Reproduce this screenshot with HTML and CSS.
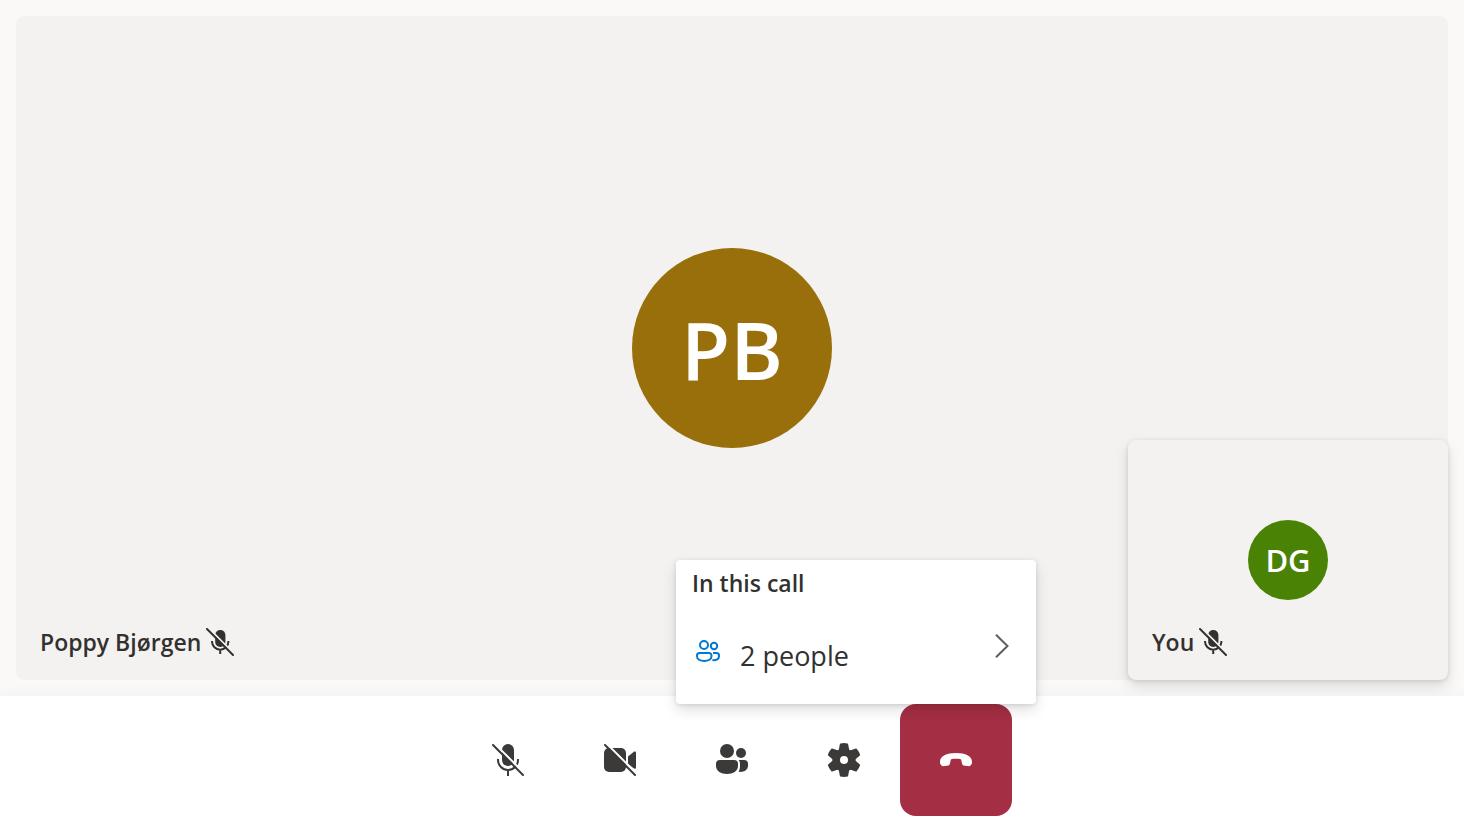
FILE: index.html
```
<!DOCTYPE html>
<html lang="en">
<head>
<meta charset="utf-8">
<meta name="viewport" content="width=device-width, initial-scale=1">
<title>Call</title>
<link rel="stylesheet" href="styles.css">
</head>
<body>
<svg class="sprite" aria-hidden="true">
  <symbol id="mic-small" viewBox="0 0 28 28">
    <rect x="9.200" y="2" width="10.200" height="17" rx="5" fill="currentColor"/>
    <path d="M6 13v.5a8.200 8.200 0 0 0 16.400 0V13M14.200 21.700V26" fill="none" stroke="currentColor" stroke-width="2"/>
    <path class="gap" d="M3 .600L27.400 25"/>
    <path d="M1 1l26 26" stroke="currentColor" stroke-width="2" stroke-linecap="round"/>
  </symbol>
</svg>
<main class="stage">
  <section class="tile tile-remote">
    <div class="avatar avatar-large">PB</div>
    <div class="name">Poppy Bjørgen <svg class="name-icon"><use href="#mic-small"/></svg></div>
    <section class="tile tile-self">
      <div class="avatar avatar-small">DG</div>
      <div class="name">You <svg class="name-icon"><use href="#mic-small"/></svg></div>
    </section>
  </section>
</main>
<footer class="bar">
  <button class="control" type="button" aria-label="Unmute">
    <svg class="icon" viewBox="0 0 32 32">
      <rect x="10" y="0" width="12" height="22" rx="6" fill="currentColor"/>
      <path d="M6 15v1a10 10 0 0 0 20 0v-1M16 26v6" fill="none" stroke="currentColor" stroke-width="2"/>
      <path class="gap" d="M3 0L32 29"/>
      <path d="M1 1l30 30" stroke="currentColor" stroke-width="2" stroke-linecap="round"/>
    </svg>
  </button>
  <button class="control" type="button" aria-label="Turn on camera">
    <svg class="icon" viewBox="0 0 32 32">
      <rect x="0" y="4" width="22" height="24" rx="5" fill="currentColor"/>
      <path d="M24 12.400l5.600-4.500C30.700 7 32 7.400 32 8.800v14.600c0 1.400-1.300 1.800-2.400.9L24 20z" fill="currentColor"/>
      <path class="gap" d="M3 0L32 29"/>
      <path d="M1 1l30 30" stroke="currentColor" stroke-width="2" stroke-linecap="round"/>
    </svg>
  </button>
  <div class="people">
    <button class="control" type="button" aria-label="People" aria-expanded="true">
      <svg class="icon" viewBox="0 0 32 32" fill="currentColor">
        <circle cx="11" cy="7" r="7"/>
        <circle cx="25" cy="9" r="5"/>
        <path d="M4 16h14a4 4 0 0 1 4 4v2c0 5-5 8-11 8S0 27 0 22v-2a4 4 0 0 1 4-4z"/>
        <path d="M22.600 16H28a4 4 0 0 1 4 4v1.500c0 4.500-4 7-9.500 6.300C23.600 26 24 24.200 24 22v-2c0-1.600-.5-3-1.400-4z"/>
      </svg>
    </button>
    <div class="popup">
      <h2 class="popup-title">In this call</h2>
      <button class="popup-row" type="button">
        <svg class="popup-people" viewBox="0 0 24 22" fill="none" stroke="currentColor" stroke-width="2">
          <circle cx="8" cy="5" r="4"/>
          <circle cx="18" cy="6" r="3.200"/>
          <path d="M3.500 13h9.500a2.500 2.500 0 0 1 2.500 2.500v.7c0 3-3.200 4.800-7.200 4.800S1 19.200 1 16.200v-.7A2.500 2.500 0 0 1 3.500 13zM17 13h3.500a2.500 2.500 0 0 1 2.500 2.500v.7c0 2.800-2.500 4.300-6.600 3.900"/>
        </svg>
        <span class="popup-label">2 people</span>
        <svg class="chevron" viewBox="0 0 14 24" fill="none" stroke="currentColor" stroke-width="2"><path d="M1 .7L12.500 12 1 23.300"/></svg>
      </button>
    </div>
  </div>
  <button class="control" type="button" aria-label="Settings">
    <svg class="gear" viewBox="-17 -17 34 34">
      <circle r="7.800" fill="none" stroke="currentColor" stroke-width="7.600"/>
      <g fill="currentColor" stroke="currentColor" stroke-width="1.600" stroke-linejoin="round">
        <path id="tooth" d="M-4.600-9L-3.300-15.800Q0-16.500 3.300-15.800L4.600-9Z"/>
        <use href="#tooth" transform="rotate(60)"/>
        <use href="#tooth" transform="rotate(120)"/>
        <use href="#tooth" transform="rotate(180)"/>
        <use href="#tooth" transform="rotate(240)"/>
        <use href="#tooth" transform="rotate(300)"/>
      </g>
    </svg>
  </button>
  <button class="control control-leave" type="button" aria-label="Leave">
    <svg class="icon" viewBox="0 0 32 32">
      <path d="M16 9c9.500 0 16 3.200 16 8.800 0 3.200-1.600 4.600-4.200 4.300l-3-.4c-1.800-.2-2.500-.9-2.900-2.700l-.5-2.500c-.2-.9-.6-1.200-1.300-1.400-2.400-.6-5.800-.6-8.200 0-.7.2-1.100.5-1.300 1.400l-.5 2.500c-.4 1.800-1.100 2.500-2.900 2.700l-3 .4C1.600 22.400 0 21 0 17.800 0 12.200 6.500 9 16 9z" fill="currentColor"/>
    </svg>
  </button>
</footer>
</body>
</html>
```
FILE: styles.css
```
* {
  box-sizing: border-box;
}

body {
  margin: 0;
  min-height: 100vh;
  display: flex;
  flex-direction: column;
  background: #faf9f8;
  color: #323130;
  font-family: "Open Sans", "Noto Sans", sans-serif;
}

button {
  border: 0;
  padding: 0;
  background: none;
  color: inherit;
  font: inherit;
  cursor: pointer;
}

svg {
  display: block;
  flex: none;
}

.sprite {
  position: absolute;
  width: 0;
  height: 0;
}

.gap {
  fill: none;
  stroke: var(--surface);
  stroke-width: 2;
}

.stage {
  flex: 1;
  display: flex;
  padding: 16px;
}

.tile {
  --surface: #f3f2f1;
  display: grid;
  place-items: center;
  background: var(--surface);
  border-radius: 8px;
}

.tile > * {
  grid-area: 1 / 1;
}

.tile-remote {
  position: relative;
  flex: 1;
}

.tile-self {
  position: absolute;
  right: 0;
  bottom: 0;
  width: 320px;
  height: 240px;
  box-shadow: 0 6px 14px rgba(0, 0, 0, 0.13), 0 1px 4px rgba(0, 0, 0, 0.11);
}

.avatar {
  display: flex;
  align-items: center;
  justify-content: center;
  border-radius: 50%;
  color: #fff;
  font-weight: 600;
}

.avatar-large {
  width: 200px;
  height: 200px;
  background: #986f0b;
  font-size: 80px;
}

.avatar-small {
  width: 80px;
  height: 80px;
  background: #498205;
  font-size: 31px;
}

.name {
  place-self: end start;
  display: flex;
  align-items: center;
  gap: 5px;
  padding: 0 24px 22px;
  font-size: 23px;
  line-height: 32px;
  font-weight: 600;
}

.name-icon {
  width: 28px;
  height: 28px;
}

.bar {
  --surface: #fff;
  display: flex;
  justify-content: center;
  padding: 8px;
  background: #fff;
  color: #3b3a39;
  box-shadow: 0 0 16px rgba(0, 0, 0, 0.04);
}

.control {
  width: 112px;
  height: 112px;
  display: flex;
  align-items: center;
  justify-content: center;
  border-radius: 16px;
}

.control-leave {
  background: #a42e43;
  color: #fff;
}

.icon {
  width: 32px;
  height: 32px;
}

.gear {
  width: 34px;
  height: 34px;
}

.people {
  position: relative;
}

.popup {
  position: absolute;
  z-index: 1;
  left: 0;
  bottom: 100%;
  width: 360px;
  background: #fff;
  border-radius: 4px;
  box-shadow: 0 6px 14px rgba(0, 0, 0, 0.13), 0 1px 4px rgba(0, 0, 0, 0.11);
  color: #323130;
}

.popup-title {
  margin: 0;
  padding: 0 16px;
  font-size: 23px;
  line-height: 46px;
  font-weight: 600;
}

.popup-row {
  display: flex;
  align-items: center;
  width: 100%;
  height: 80px;
  margin: 2px 0 16px;
  padding: 0 27px 0 20px;
  text-align: left;
}

.popup-people {
  width: 24px;
  height: 22px;
  margin-top: 6px;
  color: #0078d4;
}

.popup-label {
  flex: 1;
  padding: 16px 20px 0;
  font-size: 27px;
  line-height: 36px;
}

.chevron {
  width: 14px;
  height: 24px;
  margin-bottom: 4px;
  color: #605e5c;
}
```
